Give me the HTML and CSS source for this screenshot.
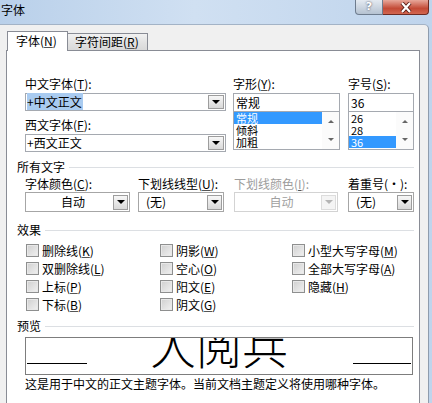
FILE: index.html
```html
<!DOCTYPE html>
<html lang="zh-CN">
<head>
    <meta charset="UTF-8">
    <title>字体</title>
    <link rel="stylesheet" href="styles.css">
</head>
<body>

<div class="window">
    <div class="titlebar">
        <span class="title">字体</span>
        <div class="caption-btns">
            <span class="btn-help">?</span>
            <span class="btn-close">
                <svg width="14" height="11" viewBox="0 0 14 11"><path d="M3 1 L11 10 M11 1 L3 10" stroke="#5a1f18" stroke-width="4"/><path d="M3 1 L11 10 M11 1 L3 10" stroke="#fff" stroke-width="2.2"/></svg>
            </span>
        </div>
    </div>

    <div class="body">
        <div class="tabs">
            <div class="tab active">字体(<u>N</u>)</div>
            <div class="tab">字符间距(<u>R</u>)</div>
        </div>

        <div class="pane">
            <div class="font-row">
                <div class="col col-face">
                    <label>中文字体(<u>T</u>):</label>
                    <div class="combo"><span class="combo-text"><span class="hl">+中文正文</span></span><span class="drop"></span></div>
                    <label class="second">西文字体(<u>F</u>):</label>
                    <div class="combo"><span class="combo-text">+西文正文</span><span class="drop"></span></div>
                </div>
                <div class="col col-style">
                    <label>字形(<u>Y</u>):</label>
                    <div class="edit">常规</div>
                    <div class="list">
                        <ul>
                            <li class="sel">常规</li>
                            <li>倾斜</li>
                            <li>加粗</li>
                        </ul>
                        <div class="vscroll"><span class="up"></span><span class="down"></span></div>
                    </div>
                </div>
                <div class="col col-size">
                    <label>字号(<u>S</u>):</label>
                    <div class="edit">36</div>
                    <div class="list">
                        <ul>
                            <li>26</li>
                            <li>28</li>
                            <li class="sel">36</li>
                        </ul>
                        <div class="vscroll"><span class="up"></span><span class="down"></span></div>
                    </div>
                </div>
            </div>

            <div class="group-title">所有文字</div>
            <div class="dd-row">
                <div class="dd-col w-color">
                    <label>字体颜色(<u>C</u>):</label>
                    <div class="dropdown"><span class="dd-text center">自动</span><span class="drop"></span></div>
                </div>
                <div class="dd-col w-uline">
                    <label>下划线线型(<u>U</u>):</label>
                    <div class="dropdown"><span class="dd-text">(无)</span><span class="drop"></span></div>
                </div>
                <div class="dd-col w-ucolor">
                    <label class="disabled">下划线颜色(<u>I</u>):</label>
                    <div class="dropdown disabled"><span class="dd-text center">自动</span><span class="drop"></span></div>
                </div>
                <div class="dd-col w-emph">
                    <label>着重号(·):</label>
                    <div class="dropdown"><span class="dd-text">(无)</span><span class="drop"></span></div>
                </div>
            </div>

            <div class="group-title effects-title">效果</div>
            <div class="effects">
                <div class="check"><span class="box"></span>删除线(<u>K</u>)</div>
                <div class="check"><span class="box"></span>阴影(<u>W</u>)</div>
                <div class="check"><span class="box"></span>小型大写字母(<u>M</u>)</div>
                <div class="check"><span class="box"></span>双删除线(<u>L</u>)</div>
                <div class="check"><span class="box"></span>空心(<u>O</u>)</div>
                <div class="check"><span class="box"></span>全部大写字母(<u>A</u>)</div>
                <div class="check"><span class="box"></span>上标(<u>P</u>)</div>
                <div class="check"><span class="box"></span>阳文(<u>E</u>)</div>
                <div class="check"><span class="box"></span>隐藏(<u>H</u>)</div>
                <div class="check"><span class="box"></span>下标(<u>B</u>)</div>
                <div class="check"><span class="box"></span>阴文(<u>G</u>)</div>
            </div>

            <div class="group-title preview-title">预览</div>
            <div class="preview">
                <span class="pline left"></span>
                <span class="sample">人阅兵</span>
                <span class="pline right"></span>
            </div>
            <p class="caption">这是用于中文的正文主题字体。当前文档主题定义将使用哪种字体。</p>
        </div>
    </div>
</div>

</body>
</html>
```

FILE: styles.css
```css
* {
    box-sizing: border-box;
}

body {
    margin: 0;
    font-family: "Noto Sans CJK SC", sans-serif;
    font-size: 12px;
    color: #000;
}

u {
    text-decoration: underline;
    text-decoration-color: #555;
    text-underline-offset: 1px;
}

.window {
    width: 432px;
    height: 403px;
    overflow: hidden;
    background: linear-gradient(90deg, #b9d0ea, #d0e0f2 45%, #bfd4ec);
}

/* title bar */
.titlebar {
    height: 24px;
    display: flex;
    align-items: flex-start;
    padding-left: 1px;
}

.title {
    line-height: 19px;
}

.caption-btns {
    display: flex;
    margin-left: auto;
    margin-right: 3px;
}

.btn-help {
    width: 28px;
    height: 15px;
    border: 1px solid #6e7c8e;
    border-top: none;
    border-radius: 0 0 0 4px;
    background: linear-gradient(#e4eaf1, #b5c2d1);
    color: #fff;
    font-family: "DejaVu Sans", sans-serif;
    font-weight: bold;
    font-size: 11px;
    line-height: 14px;
    text-align: center;
    text-shadow: 0 0 2px #334;
}

.btn-close {
    width: 46px;
    height: 15px;
    border: 1px solid #6d2a22;
    border-top: none;
    border-left: none;
    border-radius: 0 0 4px 0;
    background: linear-gradient(#e8a89b, #c34a36 60%, #d2664f);
    display: flex;
    justify-content: center;
    align-items: center;
}

/* dialog body */
.body {
    width: 429px;
    height: 379px;
    background: #f0f0f0;
    border-top: 1px solid #a3b3c6;
    border-right: 1px solid #8e9cad;
    border-radius: 0 5px 0 0;
    padding: 6px 0 0 6px;
}

.tabs {
    display: flex;
    align-items: flex-end;
    height: 20px;
    margin-left: 1px;
    margin-bottom: -1px;
    position: relative;
    z-index: 1;
}

.tab {
    height: 18px;
    line-height: 16px;
    padding-left: 7px;
    width: 80px;
    border: 1px solid #898c95;
    border-left: none;
    background: linear-gradient(#f2f2f2, #e3e3e3 50%, #d9d9d9);
}

.tab.active {
    height: 20px;
    width: 61px;
    line-height: 18px;
    padding-left: 8px;
    border-left: 1px solid #898c95;
    border-bottom: none;
    background: #fff;
}

.pane {
    width: 414px;
    height: 360px;
    background: #fff;
    border: 1px solid #898c95;
    padding: 26px 5px 0 10px;
}

label {
    display: block;
    height: 14px;
    line-height: 14px;
    margin-bottom: 2px;
    white-space: nowrap;
}

label.disabled {
    color: #9c9c9c;
}

/* font / style / size */
.font-row {
    display: flex;
    margin-left: 8px;
}

.col-face {
    width: 201px;
}

.col-style {
    width: 107px;
    margin-left: 7px;
}

.col-size {
    width: 66px;
    margin-left: 8px;
}

.combo {
    height: 18px;
    border: 1px solid #a5a9b0;
    display: flex;
    align-items: center;
    padding: 0 1px 0 1px;
}

.combo-text {
    flex: 1;
    line-height: 14px;
}

.hl {
    background: #a9cbf0;
    padding-right: 1px;
}

label.second {
    margin-top: 7px;
}

.drop {
    width: 16px;
    height: 14px;
    border: 1px solid #9d9d9d;
    background: linear-gradient(#f7f7f7, #d9d9d9);
    display: flex;
    justify-content: center;
    align-items: center;
}

.drop::after {
    content: "";
    border-left: 4px solid transparent;
    border-right: 4px solid transparent;
    border-top: 4px solid #000;
}

.edit {
    height: 19px;
    border: 1px solid #a5a9b0;
    padding-left: 2px;
    line-height: 17px;
}

.list {
    height: 39px;
    margin-top: -1px;
    border: 1px solid #a5a9b0;
    display: flex;
}

.list ul {
    flex: 1;
    margin: 0;
    padding: 0;
    list-style: none;
}

.list li {
    height: 12px;
    line-height: 12px;
    font-size: 11px;
    padding-left: 2px;
}

.list li.sel {
    background: #3399ff;
    color: #fff;
}

.vscroll {
    width: 17px;
    display: flex;
    flex-direction: column;
    background: #fbfbfb;
}

.vscroll span {
    flex: 1;
    display: flex;
    justify-content: center;
    align-items: center;
}

.vscroll .up::after {
    content: "";
    border-left: 3px solid transparent;
    border-right: 3px solid transparent;
    border-bottom: 3px solid #666;
}

.vscroll .down::after {
    content: "";
    border-left: 3px solid transparent;
    border-right: 3px solid transparent;
    border-top: 3px solid #666;
}

/* group headings */
.group-title {
    display: flex;
    align-items: center;
    height: 14px;
    line-height: 14px;
    margin-top: 8px;
}

.group-title::after {
    content: "";
    flex: 1;
    border-top: 1px solid #dcdfe3;
    margin-left: 4px;
}

.effects-title {
    margin-top: 11px;
}

.preview-title {
    margin-top: 6px;
}

/* dropdown row */
.dd-row {
    display: flex;
    margin-left: 8px;
    margin-top: 3px;
}

.dd-row label {
    margin-bottom: 1px;
}

.w-color {
    width: 105px;
}

.w-uline {
    width: 86px;
    margin-left: 8px;
}

.w-ucolor {
    width: 104px;
    margin-left: 10px;
}

.w-emph {
    width: 66px;
    margin-left: 10px;
}

.dropdown {
    height: 20px;
    border: 1px solid #a6a6a6;
    display: flex;
    align-items: center;
    padding: 0 1px 0 4px;
}

.dd-text {
    flex: 1;
    line-height: 14px;
    padding-left: 3px;
}

.dd-text.center {
    text-align: center;
}

.dropdown .drop {
    width: 15px;
    height: 15px;
}

.dropdown.disabled {
    border-color: #d3d3d3;
    color: #a0a0a0;
}

.dropdown.disabled .drop {
    border-color: #dcdcdc;
    background: #f4f4f4;
}

.dropdown.disabled .drop::after {
    border-top-color: #b4b4b4;
}

/* effects */
.effects {
    display: grid;
    grid-template-columns: 134px 132px auto;
    grid-auto-rows: 18px;
    margin: 4px 0 0 9px;
}

.check {
    display: flex;
    align-items: center;
    white-space: nowrap;
}

.box {
    width: 13px;
    height: 13px;
    border: 1px solid #8e8f8f;
    background: linear-gradient(135deg, #cfcfcf, #f1f1f1);
    box-shadow: inset 0 0 0 1px #e8e8e8;
    margin-right: 3px;
}

/* preview */
.preview {
    height: 38px;
    width: 388px;
    margin: 4px 0 0 8px;
    border: 1px solid #7d7d7d;
    display: grid;
    grid-template-columns: 1fr auto 1fr;
    overflow: hidden;
}

.pline {
    height: 1px;
    background: #000;
    margin-top: 25px;
}

.pline.left {
    width: 60px;
    margin-left: 1px;
}

.pline.right {
    width: 58px;
    margin-right: 1px;
    justify-self: end;
}

.sample {
    font-size: 46px;
    line-height: 46px;
    margin-top: -17px;
    font-weight: 300;
}

.caption {
    margin: 2px 0 0 8px;
    line-height: 14px;
    white-space: nowrap;
}
```
